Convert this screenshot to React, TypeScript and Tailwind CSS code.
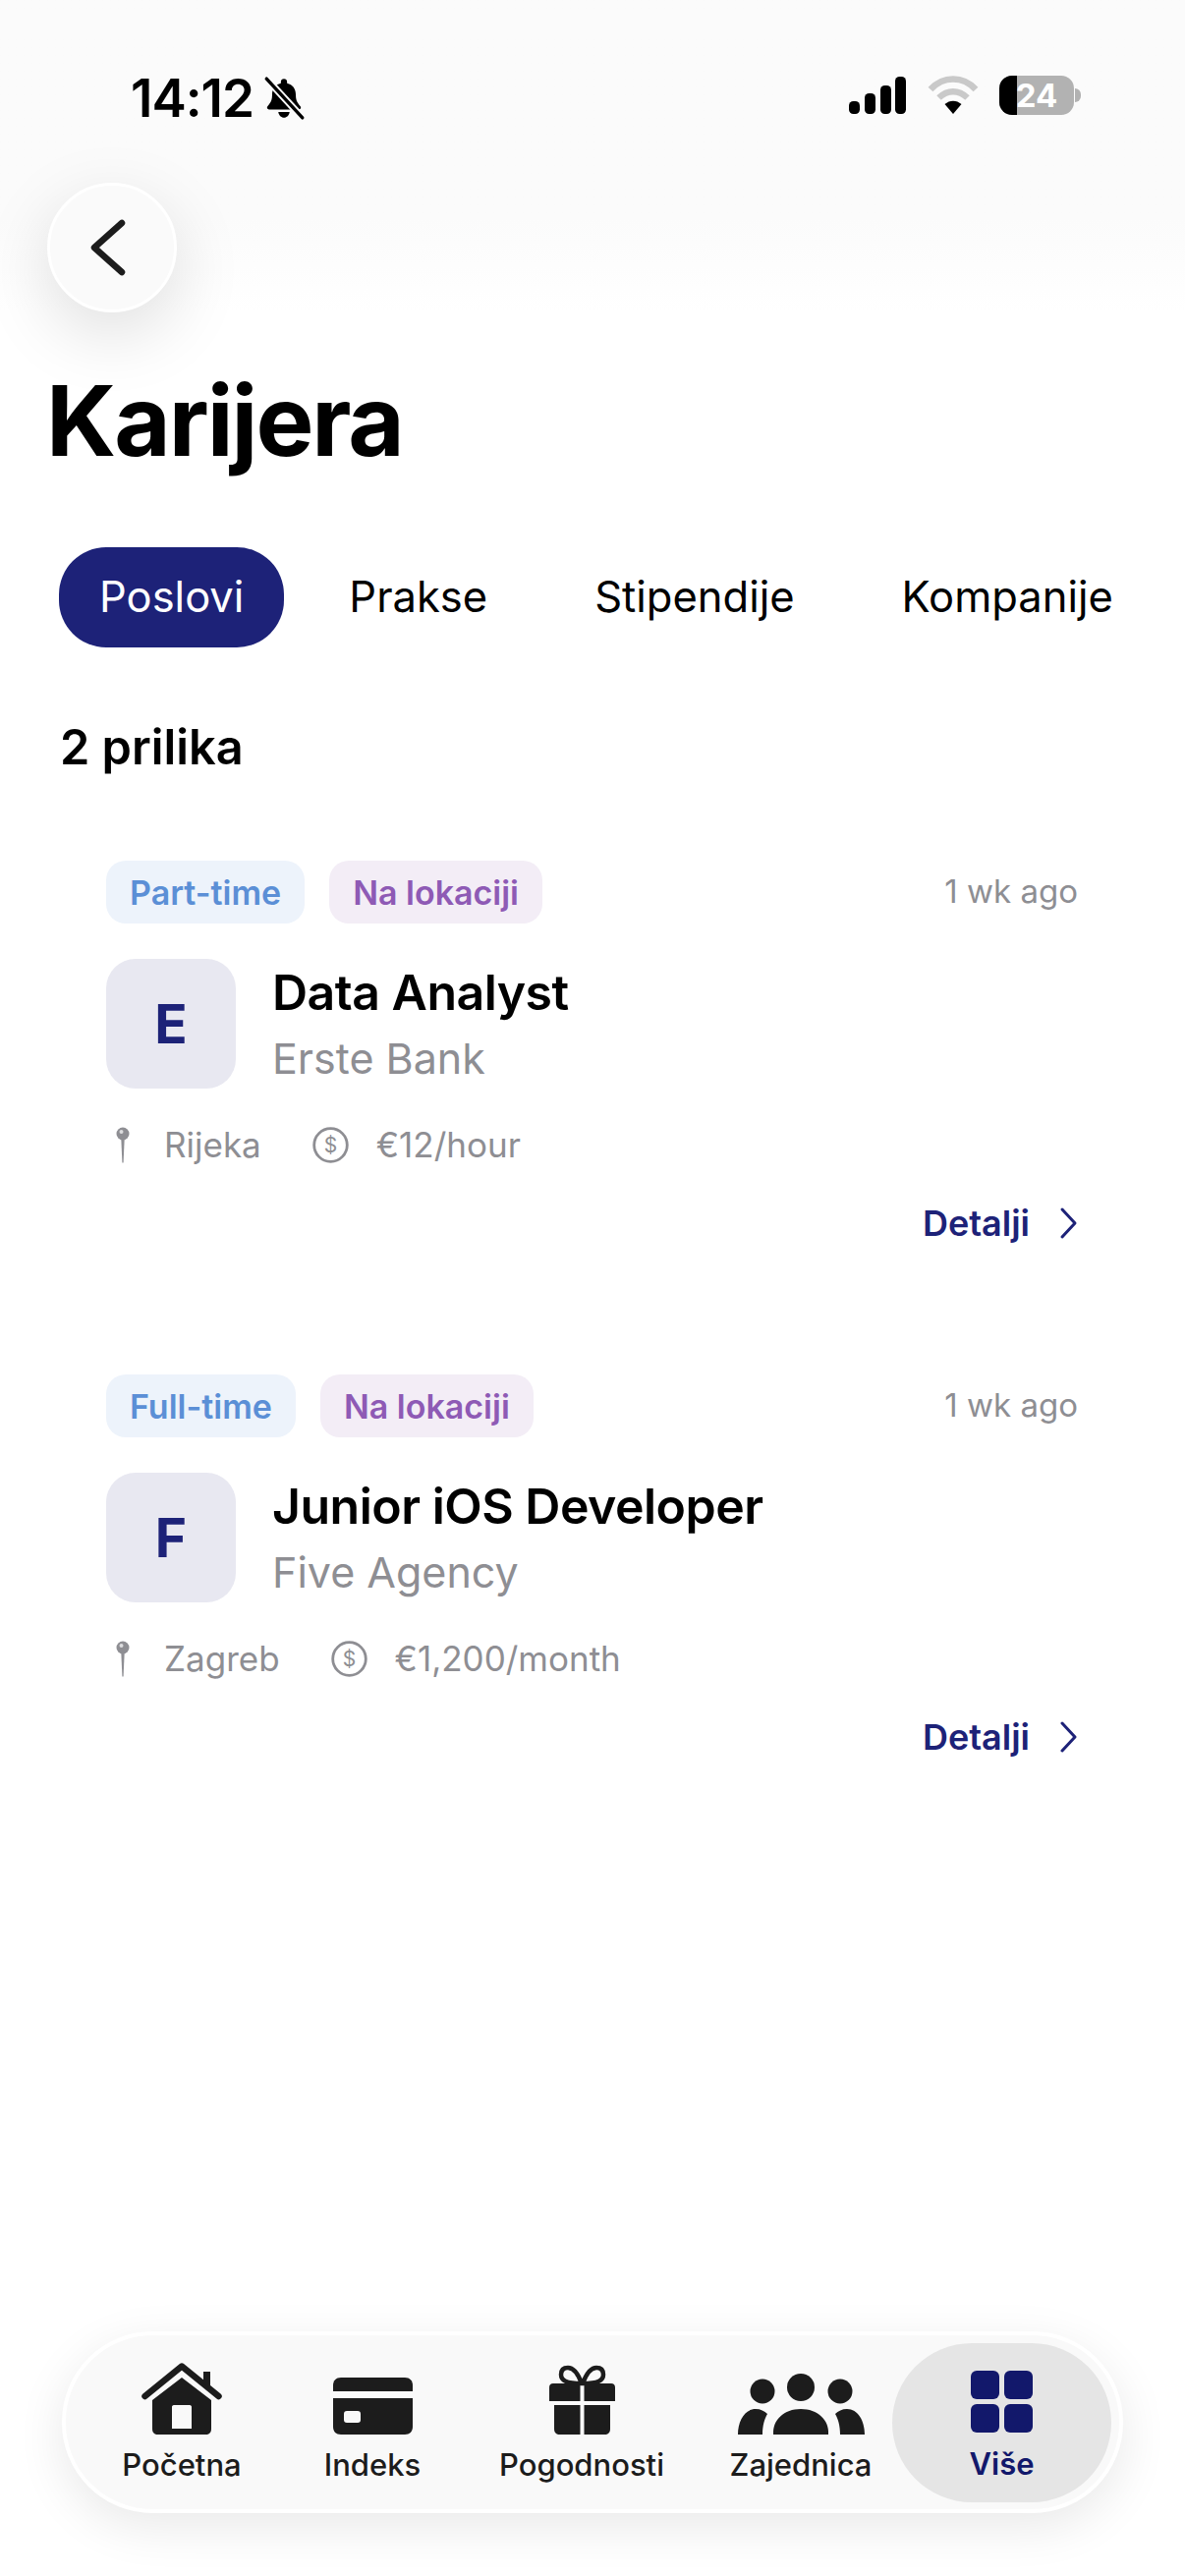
const sans = "font-['Inter','Noto_Sans',sans-serif]"

function BellSlash() {
    return (
        <svg width="46" height="46" viewBox="0 0 44 44" className="text-black">
            <path fill="currentColor" d="M22 3c1.800 0 3 1.200 3 3v1.500c5.500 1.300 8.500 5.500 8.500 11 0 5 1 7.500 4.500 11.500 1 1.300.3 3-1.500 3H7.500C5.700 33 5 31.300 6 30c3.500-4 4.500-6.500 4.500-11.500 0-5.500 3-9.700 8.500-11V6c0-1.800 1.200-3 3-3z" />
            <path fill="currentColor" d="M16.500 35.500h11C27 38.800 24.800 41 22 41s-5-2.200-5.500-5.500z" />
            <path stroke="#fcfcfc" strokeWidth="7" d="M5 3l35 38" />
            <path stroke="currentColor" strokeWidth="3.200" strokeLinecap="round" d="M5 3l35 38" />
        </svg>
    )
}

function StatusBar() {
    return (
        <div className="flex h-[186px] items-start justify-between pl-[133px] pr-[106px] pt-[70px]">
            <div className="flex items-center gap-[8px]">
                <span className="text-[53px] font-semibold leading-[60px] tracking-[-1px] text-black">14:12</span>
                <BellSlash />
            </div>
            <div className="flex items-center pt-[7px]">
                <svg width="58" height="38" viewBox="0 0 58 38" className="mr-[22px]">
                    <rect x="0" y="25" width="11" height="13" rx="4.500" />
                    <rect x="16" y="17" width="11" height="21" rx="4.500" />
                    <rect x="32" y="9" width="11" height="29" rx="4.500" />
                    <rect x="47" y="0" width="11" height="38" rx="4.500" />
                </svg>
                <svg width="52" height="40" viewBox="0 0 52 40" className="mr-[21px]">
                    <path fill="none" stroke="#c9c9c9" strokeWidth="6.500" d="M3 14C16 0 36 0 49 14" />
                    <path fill="none" stroke="#c9c9c9" strokeWidth="6.500" d="M11.500 22.500c9-8.500 20-8.500 29 0" />
                    <path fill="#000" d="M17.500 29c5-4.500 12-4.500 17 0L26 39z" />
                </svg>
                <div className="relative flex h-[40px] w-[76px] items-center justify-center overflow-hidden rounded-[13px] bg-[#b2b2b2]">
                    <div className="absolute inset-y-0 left-0 w-[18px] bg-black" />
                    <span className="relative text-[33px] font-bold leading-none text-white">24</span>
                </div>
                <div className="ml-[1px] h-[14px] w-[6px] rounded-r-full bg-[#b2b2b2]" />
            </div>
        </div>
    )
}

function Tabs() {
    const tabs = ["Poslovi", "Prakse", "Stipendije", "Kompanije"]
    return (
        <div className="mt-[69px] flex gap-[23px] pl-[60px]">
            {tabs.map((t, i) => (
                <div
                    key={t}
                    className={
                        i === 0
                            ? "flex h-[102px] items-center rounded-[48px] bg-[#1d2278] px-[41px] text-[43.500px] text-white"
                            : "flex h-[102px] items-center px-[43px] text-[43.500px] text-black"
                    }
                >
                    {t}
                </div>
            ))}
        </div>
    )
}

function Pin() {
    return (
        <svg width="16" height="38" viewBox="0 0 16 38" className="text-[#8e8e93]">
            <circle cx="8" cy="8" r="6.500" fill="currentColor" />
            <circle cx="6.500" cy="6" r="2" fill="#fff" opacity="0.7" />
            <path d="M6.300 13h3.400L8.600 37.500h-1.200z" fill="currentColor" />
        </svg>
    )
}

function Coin() {
    return (
        <svg width="37" height="37" viewBox="0 0 37 37" className="text-[#8e8e93]">
            <circle cx="18.500" cy="18.500" r="16.800" fill="none" stroke="currentColor" strokeWidth="2.800" />
            <text x="18.500" y="26" textAnchor="middle" fontSize="21" fill="currentColor" fontFamily="Inter">$</text>
        </svg>
    )
}

type Job = {
    type: string
    letter: string
    title: string
    company: string
    city: string
    pay: string
}

function JobCard({ job }: { job: Job }) {
    return (
        <div className="h-[523px] pl-[108px] pr-[109px]">
            <div className="flex h-[64px] items-center justify-between">
                <div className="flex gap-[25px]">
                    <span className="flex h-[64px] items-center rounded-[20px] bg-[#edf3fb] px-[24px] text-[34px] font-semibold text-[#5b8fd6]">
                        {job.type}
                    </span>
                    <span className="flex h-[64px] items-center rounded-[20px] bg-[#f3edf6] px-[24px] text-[34px] font-semibold text-[#8e5ab5]">
                        Na lokaciji
                    </span>
                </div>
                <span className="text-[33px] text-[#8e8e93]">1 wk ago</span>
            </div>
            <div className="mt-[36px] flex items-start gap-[37px]">
                <div className="flex h-[132px] w-[132px] items-center justify-center rounded-[30px] bg-[#e8e8f1] text-[55px] font-bold text-[#1d2278]">
                    {job.letter}
                </div>
                <div>
                    <div className="mt-[2px] text-[50px] font-semibold leading-[64px] tracking-[-0.5px] text-black">{job.title}</div>
                    <div className="mt-[7px] text-[43px] leading-[56px] text-[#8e8e93]">{job.company}</div>
                </div>
            </div>
            <div className="mt-[37px] flex h-[40px] items-center text-[35px] text-[#8e8e93]">
                <div className="ml-[9px]"><Pin /></div>
                <span className="ml-[34px]">{job.city}</span>
                <div className="ml-[52px]"><Coin /></div>
                <span className="ml-[28px]">{job.pay}</span>
            </div>
            <div className="mt-[40px] flex h-[40px] items-center justify-end text-[36px] font-semibold text-[#1d2278]">
                Detalji
                <svg width="19" height="34" viewBox="0 0 19 34" className="ml-[30px]" fill="none" stroke="currentColor" strokeWidth="3" strokeLinecap="round" strokeLinejoin="round">
                    <path d="M3 3l13 14L3 31" />
                </svg>
            </div>
        </div>
    )
}

const iconDark = "#1c1c1c"

function NavHome() {
    return (
        <svg width="82" height="73" viewBox="0 0 82 73" fill={iconDark}>
            <path fill="none" stroke={iconDark} strokeWidth="6.500" strokeLinecap="round" strokeLinejoin="round" d="M3.500 34L41 3.500 78.500 34" />
            <path d="M63 9h7v18l-7-6z" />
            <path fillRule="evenodd" d="M41 15l30 23v29c0 4-2 6-6 6H17c-4 0-6-2-6-6V38zM31 45v22h20V45c0-1-.5-2-2-2H33c-1.500 0-2 1-2 2z" />
        </svg>
    )
}

function NavCard() {
    return (
        <svg width="81" height="58" viewBox="0 0 81 58" fill={iconDark}>
            <path d="M0 14V8c0-5 3-8 8-8h65c5 0 8 3 8 8v6z" />
            <path fillRule="evenodd" d="M0 21h81v29c0 5-3 8-8 8H8c-5 0-8-3-8-8zM14 34c-2 0-3 1-3 3v6c0 2 1 3 3 3h11c2 0 3-1 3-3v-6c0-2-1-3-3-3z" />
        </svg>
    )
}

function NavGift() {
    return (
        <svg width="67" height="71" viewBox="0 0 67 71" fill={iconDark}>
            <path fill="none" stroke={iconDark} strokeWidth="4.500" d="M33 19c-3-8-7-16-14-16-5 0-7 3-7 7 0 6 5 9 21 9zM34 19c3-8 7-16 14-16 5 0 7 3 7 7 0 6-5 9-21 9z" />
            <path d="M4 19h27.500v18H0V23c0-2.500 1.500-4 4-4zM35.500 19H63c2.500 0 4 1.500 4 4v14H35.500z" />
            <path d="M5 41h26.500v30H11c-4 0-6-2-6-6zM35.500 41H62v24c0 4-2 6-6 6H35.500z" />
        </svg>
    )
}

function NavPeople() {
    return (
        <svg width="129" height="62" viewBox="0 0 129 62" fill={iconDark}>
            <circle cx="25" cy="18" r="12.500" />
            <circle cx="64" cy="14" r="14" />
            <circle cx="104" cy="18" r="12.500" />
            <path d="M0 62c0-14 7-26 18-26 5 0 9 2 12 5-3 5-5 12-5 21z" />
            <path d="M36 62c-1-15 11-26 28-26s29 11 28 26z" />
            <path d="M111 36c11 0 18 12 18 26h-25c0-9-2-16-5-21 3-3 7-5 12-5z" />
        </svg>
    )
}

function NavGrid() {
    return (
        <svg width="63" height="63" viewBox="0 0 63 63" fill="#12186b">
            <rect x="0" y="0" width="29" height="29" rx="6" />
            <rect x="34" y="0" width="29" height="29" rx="6" />
            <rect x="0" y="34" width="29" height="29" rx="6" />
            <rect x="34" y="34" width="29" height="29" rx="6" />
        </svg>
    )
}

function BottomNav() {
    const items = [
        { label: "Početna", icon: <NavHome />, width: "w-[202px]" },
        { label: "Indeks", icon: <NavCard />, width: "w-[186px]" },
        { label: "Pogodnosti", icon: <NavGift />, width: "w-[240px]" },
        { label: "Zajednica", icon: <NavPeople />, width: "ml-[10px] w-[186px]" },
    ]
    return (
        <div className="mx-[63px] mb-[64px] mt-auto flex h-[185px] items-center rounded-[92px] border-[4px] border-white bg-[#f9f9f9] pl-[17px] pr-[8px] shadow-[0_14px_50px_rgba(0,0,0,0.09)]">
            {items.map((it) => (
                <div key={it.label} className={`flex shrink-0 flex-col items-center ${it.width}`}>
                    <div className="flex h-[74px] items-end">{it.icon}</div>
                    <span className="mt-[12px] text-[31px] font-medium leading-[38px] text-[#1c1c1c]">{it.label}</span>
                </div>
            ))}
            <div className="ml-auto flex h-[162px] w-[223px] shrink-0 flex-col items-center justify-center rounded-[81px] bg-[#e5e5e5]">
                <div className="mt-[5px] flex h-[66px] items-end"><NavGrid /></div>
                <span className="mt-[13px] text-[31px] font-semibold leading-[38px] text-[#12186b]">Više</span>
            </div>
        </div>
    )
}

const jobs: Job[] = [
    { type: "Part-time", letter: "E", title: "Data Analyst", company: "Erste Bank", city: "Rijeka", pay: "€12/hour" },
    { type: "Full-time", letter: "F", title: "Junior iOS Developer", company: "Five Agency", city: "Zagreb", pay: "€1,200/month" },
]

export default function App() {
    return (
        <div className={`flex h-[2622px] w-[1206px] flex-col overflow-hidden bg-white ${sans}`}>
            <div className="bg-gradient-to-b from-[#fbfbfb] from-70% to-white">
                <StatusBar />
                <div className="pl-[48px]">
                    <button className="flex h-[132px] w-[132px] items-center justify-center rounded-full border-[3px] border-white bg-[#fafafa] shadow-[0_22px_70px_rgba(0,0,0,0.13)]">
                        <svg width="36" height="58" viewBox="0 0 36 58" className="mr-[8px]" fill="none" stroke="#1c1c1c" strokeWidth="6.500" strokeLinecap="round" strokeLinejoin="round">
                            <path d="M32 4L4 29l28 25" />
                        </svg>
                    </button>
                </div>
            </div>
            <h1 className="ml-[47px] mt-[50px] text-[99px] font-bold leading-[120px] tracking-[-2px] text-black">Karijera</h1>
            <Tabs />
            <div className="ml-[61px] mt-[72px] text-[48.700px] font-semibold leading-[60px] text-black">2 prilika</div>
            <div className="mt-[85px]">
                {jobs.map((j) => (
                    <JobCard key={j.title} job={j} />
                ))}
            </div>
            <BottomNav />
        </div>
    )
}
